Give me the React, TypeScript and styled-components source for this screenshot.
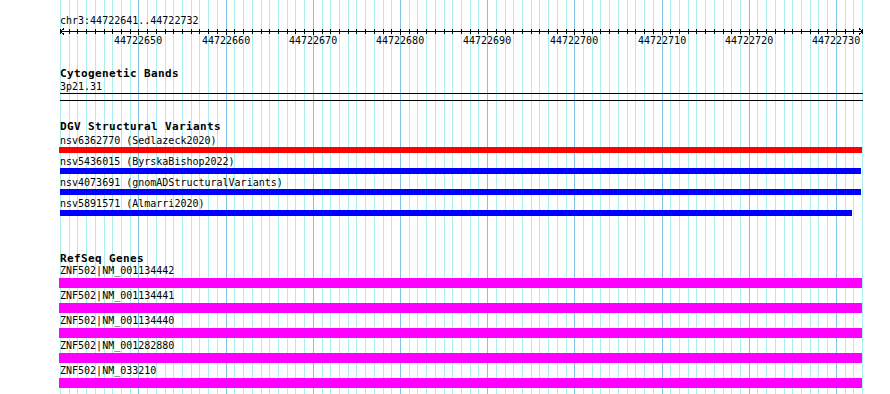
import React from 'react';
import styled, { createGlobalStyle } from 'styled-components';

const START = 44722641;
const END = 44722732;
const LEFT = 60;
const TRACK_WIDTH = 802;
const BASES = END - START + 1;
const PX_PER_BASE = TRACK_WIDTH / BASES;
const PAGE_W = 890;
const PAGE_H = 394;

const basePx = (i: number) => Math.round(i * PX_PER_BASE);

type Feature = {
  label: string;
  from: number;
  to: number;
  color: string;
};

const dgvFeatures: Feature[] = [
  { label: 'nsv6362770 (Sedlazeck2020)', from: -1, to: 802, color: '#ff0000' },
  { label: 'nsv5436015 (ByrskaBishop2022)', from: 0, to: 801, color: '#0000ff' },
  { label: 'nsv4073691 (gnomADStructuralVariants)', from: 0, to: 801, color: '#0000ff' },
  { label: 'nsv5891571 (Almarri2020)', from: 0, to: 792, color: '#0000ff' },
];

const refSeqFeatures: Feature[] = [
  'ZNF502|NM_001134442',
  'ZNF502|NM_001134441',
  'ZNF502|NM_001134440',
  'ZNF502|NM_001282880',
  'ZNF502|NM_033210',
].map(label => ({ label, from: -1, to: 802, color: '#ff00ff' }));

const GlobalStyle = createGlobalStyle`
  body {
    margin: 0;
    background: #ffffff;
  }
`;

const S_Page = styled.div`
  position: relative;
  width: ${PAGE_W}px;
  height: ${PAGE_H}px;
  overflow: hidden;
  background: #ffffff;
  font-family: 'DejaVu Sans Mono', 'Liberation Mono', monospace;
  color: #000000;
`;

const S_Grid = styled.svg`
  position: absolute;
  top: 0;
  left: 0;
`;

const S_Tracks = styled.div`
  position: relative;
  display: flex;
  flex-direction: column;
  width: ${TRACK_WIDTH + 1}px;
  padding: 14px 0 0 ${LEFT}px;
`;

const S_Location = styled.div`
  font-size: 10px;
  line-height: 13px;
  height: 13px;
  white-space: pre;
`;

const S_Ruler = styled.svg`
  display: block;
  overflow: visible;
`;

const S_Section = styled.section<{ $gap: number }>`
  display: flex;
  flex-direction: column;
  margin-top: ${props => props.$gap}px;
`;

const S_Title = styled.div`
  font-size: 11px;
  font-weight: bold;
  letter-spacing: 0.38px;
  line-height: 12px;
  height: 12px;
  white-space: pre;
`;

const S_Label = styled.div`
  font-size: 10px;
  line-height: 12px;
  height: 12px;
  white-space: pre;
`;

const S_Band = styled.div`
  box-sizing: border-box;
  height: 8px;
  width: ${TRACK_WIDTH + 1}px;
  border-top: 1px solid #000000;
  border-bottom: 1px solid #000000;
`;

const S_Feature = styled.div<{ $after: number }>`
  display: flex;
  flex-direction: column;
  margin-bottom: ${props => props.$after}px;
`;

const S_Bar = styled.div<{ $color: string; $height: number; $before: number }>`
  height: ${props => props.$height}px;
  margin-top: ${props => props.$before}px;
  background: ${props => props.$color};
`;

const Grid = () => {
  const lines = [];
  for (let i = 0; i <= BASES; i++) {
    const major = (START + i) % 10 === 0;
    const x = LEFT + basePx(i) + 0.5;
    lines.push(
      <line
        key={i}
        x1={x}
        x2={x}
        y1={0}
        y2={PAGE_H}
        stroke={major ? '#7fc4e6' : '#aaeeee'}
        strokeWidth={1}
      />
    );
  }
  return (
    <S_Grid width={PAGE_W} height={PAGE_H} shapeRendering="crispEdges">
      {lines}
    </S_Grid>
  );
};

const Ruler = () => {
  const ticks = [];
  const labels = [];
  for (let i = 0; i <= BASES; i++) {
    const major = (START + i) % 10 === 0;
    const x = basePx(i) + 0.5;
    ticks.push(
      <line key={i} x1={x} x2={x} y1={2} y2={major ? 8 : 7} stroke="#000" />
    );
    if (major) {
      labels.push(
        <text key={i} x={basePx(i) - 24} y={17} fill="#000">
          {START + i}
        </text>
      );
    }
  }
  return (
    <S_Ruler width={TRACK_WIDTH + 2} height={20} shapeRendering="crispEdges">
      <line x1={0} x2={TRACK_WIDTH} y1={4.5} y2={4.5} stroke="#000" />
      <polyline points="4,1.5 0.5,4.5 4,7.5" fill="none" stroke="#000" />
      <polyline
        points={`${TRACK_WIDTH - 3},1.5 ${TRACK_WIDTH + 0.5},4.5 ${TRACK_WIDTH - 3},7.5`}
        fill="none"
        stroke="#000"
      />
      {ticks}
      <g fontFamily="'DejaVu Sans Mono', monospace" fontSize={10}>
        {labels}
      </g>
    </S_Ruler>
  );
};

const FeatureRow = ({
  feature,
  height,
  before,
  after,
}: {
  feature: Feature;
  height: number;
  before: number;
  after: number;
}) => (
  <S_Feature $after={after}>
    <S_Label>{feature.label}</S_Label>
    <S_Bar
      $color={feature.color}
      $height={height}
      $before={before}
      style={{ marginLeft: feature.from, width: feature.to - feature.from }}
    />
  </S_Feature>
);

export default function App() {
  return (
    <>
      <GlobalStyle />
      <S_Page>
        <Grid />
        <S_Tracks>
          <S_Location>{`chr3:${START}..${END}`}</S_Location>
          <Ruler />

          <S_Section $gap={21}>
            <S_Title>Cytogenetic Bands</S_Title>
            <S_Label style={{ marginTop: 1 }}>3p21.31</S_Label>
            <S_Band />
          </S_Section>

          <S_Section $gap={20}>
            <S_Title>DGV Structural Variants</S_Title>
            <div style={{ height: 2 }} />
            {dgvFeatures.map(f => (
              <FeatureRow key={f.label} feature={f} height={6} before={0} after={3} />
            ))}
          </S_Section>

          <S_Section $gap={34}>
            <S_Title>RefSeq Genes</S_Title>
            {refSeqFeatures.map(f => (
              <FeatureRow key={f.label} feature={f} height={10} before={1} after={2} />
            ))}
          </S_Section>
        </S_Tracks>
      </S_Page>
    </>
  );
}
